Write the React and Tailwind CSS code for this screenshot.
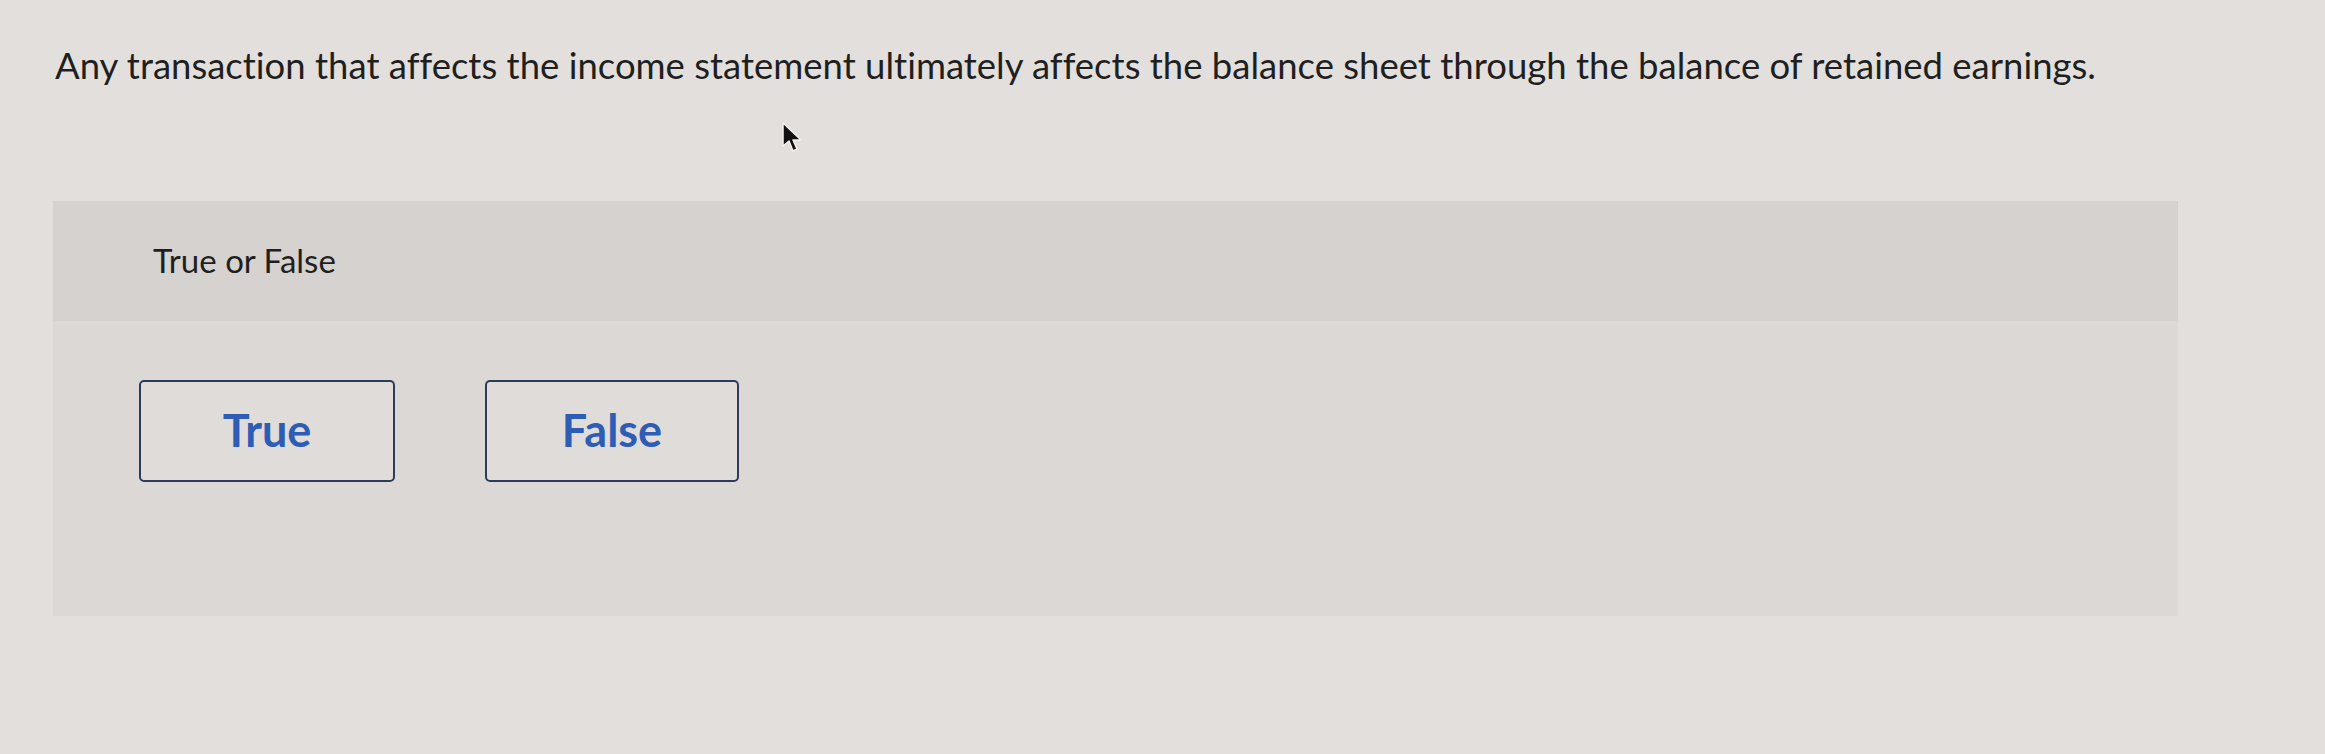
export default function App() {
  return (
    <div className="relative min-h-screen bg-[#e2dfdc] pl-[55px] pt-[44px] font-['Lato',sans-serif] text-[#1f1f1f] [font-variant-ligatures:none]">
      <p className="text-[36.5px] leading-[42px]">
        Any transaction that affects the income statement ultimately affects the balance sheet through the balance of retained earnings.
      </p>

      {/* mouse pointer */}
      <svg
        className="absolute left-[781px] top-[122px]"
        width="22"
        height="32"
        viewBox="0 0 22 32"
      >
        <path
          d="M2 1 L2 24 L8 19 L12 29 L16 27 L12 18 L20 18 Z"
          fill="#111"
          stroke="#f4f2f0"
          strokeWidth="1.5"
          strokeLinejoin="round"
        />
      </svg>

      <div className="mt-[115px] w-[2125px] -ml-[2px] bg-[#dbd8d5]">
        <div className="flex h-[120px] items-center bg-[#d5d2cf] pl-[100px]">
          <span className="text-[33px]">True or False</span>
        </div>
        <div className="flex gap-[90px] pl-[86px] pt-[59px] pb-[134px]">
          <button className="flex h-[102px] w-[256px] items-center justify-center rounded-[5px] border-2 border-[#2e3b58] bg-[#dfdcd9] text-[45px] font-bold text-[#2f5cb5]">
            True
          </button>
          <button className="flex h-[102px] w-[254px] items-center justify-center rounded-[5px] border-2 border-[#2e3b58] bg-[#dfdcd9] text-[45px] font-bold text-[#2f5cb5]">
            False
          </button>
        </div>
      </div>
    </div>
  );
}
